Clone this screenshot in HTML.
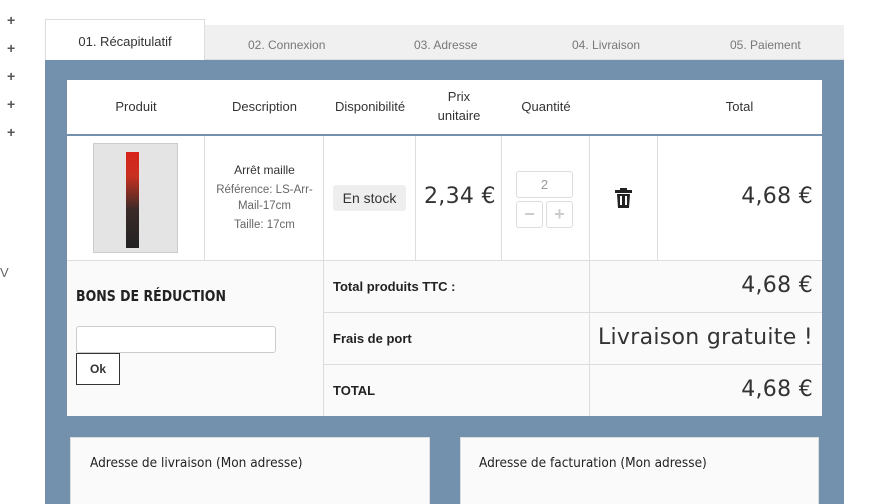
<!DOCTYPE html>
<html><head><meta charset="utf-8"><style>
*{margin:0;padding:0;box-sizing:border-box}
html,body{width:888px;height:504px;overflow:hidden}
body{background:#fff;font-family:"Liberation Sans",sans-serif;position:relative;color:#333}
.a{position:absolute}
.plus{left:7px;font-size:14px;color:#555;font-weight:bold}
.tabbar{left:45px;top:25px;width:799px;height:35px;background:#f0f0f0;border-bottom:1px solid #ddd}
.tab{top:38px;font-size:12px;color:#777}
.act{left:45px;top:19px;width:160px;height:42px;background:#fff;border:1px solid #ddd;border-bottom:none;font-size:13px;color:#333;text-align:center;padding-top:14px}
.panel{left:45px;top:60px;width:799px;height:444px;background:#7390ad}
.tbl{left:67px;top:80px;width:755px;height:336px;background:#fff}
.h{top:80px;height:54px;display:flex;align-items:center;justify-content:center;text-align:center;font-size:13px;color:#333;line-height:19px}
.vl{width:1px;background:#ddd}
.hl{height:1px;background:#ddd}
.sum{background:#fafafa}
.lbl{font-size:13px;font-weight:bold;color:#222}
.big{font-family:"DejaVu Sans",sans-serif;font-size:22px;color:#333;letter-spacing:0.3px}
.addr{background:#fafafa;border:1px solid #ddd;border-bottom:none}
.cond{font-family:"DejaVu Sans Condensed","DejaVu Sans",sans-serif}
</style></head><body>
<div class="a plus" style="top:12px">+</div>
<div class="a plus" style="top:40px">+</div>
<div class="a plus" style="top:68px">+</div>
<div class="a plus" style="top:96px">+</div>
<div class="a plus" style="top:124px">+</div>
<div class="a" style="left:0;top:265px;font-size:13px;color:#666">V</div>
<div class="a tabbar"></div>
<div class="a tab" style="left:248px">02. Connexion</div>
<div class="a tab" style="left:414px">03. Adresse</div>
<div class="a tab" style="left:572px">04. Livraison</div>
<div class="a tab" style="left:730px">05. Paiement</div>
<div class="a act">01. Récapitulatif</div>
<div class="a panel"></div>
<div class="a tbl"></div>
<div class="a h" style="left:67px;width:138px;top:79px">Produit</div>
<div class="a h" style="left:205px;width:119px;top:79px">Description</div>
<div class="a h" style="left:324px;width:92px;top:79px">Disponibilité</div>
<div class="a h" style="left:416px;width:86px;top:79px">Prix<br>unitaire</div>
<div class="a h" style="left:502px;width:88px;top:79px">Quantité</div>
<div class="a h" style="left:657px;width:165px;top:79px">Total</div>
<div class="a" style="left:67px;top:134px;width:755px;height:2px;background:#7390ad"></div>
<div class="a vl" style="left:204px;top:136px;height:124px"></div>
<div class="a vl" style="left:323px;top:136px;height:280px"></div>
<div class="a vl" style="left:415px;top:136px;height:124px"></div>
<div class="a vl" style="left:501px;top:136px;height:124px"></div>
<div class="a vl" style="left:589px;top:136px;height:280px"></div>
<div class="a vl" style="left:657px;top:136px;height:124px"></div>
<div class="a sum" style="left:67px;top:261px;width:256px;height:155px"></div>
<div class="a sum" style="left:324px;top:261px;width:265px;height:155px"></div>
<div class="a sum" style="left:590px;top:261px;width:232px;height:155px"></div>
<div class="a hl" style="left:67px;top:260px;width:755px"></div>
<div class="a hl" style="left:324px;top:312px;width:498px"></div>
<div class="a hl" style="left:324px;top:364px;width:498px"></div>
<div class="a vl" style="left:323px;top:260px;height:156px"></div>
<div class="a vl" style="left:589px;top:260px;height:156px"></div>
<div class="a" style="left:93px;top:143px;width:85px;height:110px;background:#e4e4e4;border:1px solid #ccc"></div>
<div class="a" style="left:126px;top:152px;width:13px;height:96px;background:linear-gradient(#d8221a 0%,#c83020 25%,#3a2a28 60%,#222 100%)"></div>
<div class="a" style="left:205px;top:162px;width:119px;text-align:center;font-size:12px;color:#333;line-height:16px">Arrêt maille</div>
<div class="a" style="left:205px;top:182px;width:119px;text-align:center;font-size:11.5px;color:#666;line-height:16px">Référence: LS-Arr-<br>Mail-17cm</div>
<div class="a" style="left:205px;top:219px;width:119px;text-align:center;font-size:11.5px;color:#666">Taille: 17cm</div>
<div class="a" style="left:333px;top:185px;width:73px;height:26px;background:#eee;border-radius:3px;font-size:14px;color:#333;text-align:center;line-height:26px">En stock</div>
<div class="a big" style="left:424px;top:184px">2,34 €</div>
<div class="a" style="left:516px;top:171px;width:57px;height:27px;border:1px solid #ddd;border-radius:3px;font-size:13px;color:#999;text-align:center;line-height:25px">2</div>
<div class="a" style="left:516px;top:201px;width:27px;height:27px;border:1px solid #ddd;border-radius:3px;color:#ccc;text-align:center;line-height:25px;font-size:18px;font-weight:bold">−</div>
<div class="a" style="left:546px;top:201px;width:27px;height:27px;border:1px solid #ddd;border-radius:3px;color:#ccc;text-align:center;line-height:25px;font-size:18px;font-weight:bold">+</div>
<svg class="a" style="left:615px;top:188px" width="17" height="20" viewBox="0 0 17 20"><rect x="0" y="2" width="17" height="3" fill="#222"/><rect x="5" y="0" width="7" height="3" fill="#222"/><path d="M2 6h13l-1 14H3z" fill="#222"/><rect x="5" y="8" width="2" height="9" fill="#fff"/><rect x="10" y="8" width="2" height="9" fill="#fff"/></svg>
<div class="a big" style="right:75px;top:184px">4,68 €</div>
<div class="a cond" style="left:76px;top:287px;font-size:15.5px;font-weight:bold;color:#222;transform:scaleX(0.9);transform-origin:left">BONS DE RÉDUCTION</div>
<div class="a" style="left:76px;top:326px;width:200px;height:27px;background:#fff;border:1px solid #ccc;border-radius:3px"></div>
<div class="a" style="left:76px;top:353px;width:44px;height:32px;background:#fff;border:1px solid #333;font-size:12px;font-weight:bold;text-align:center;line-height:30px">Ok</div>
<div class="a lbl" style="left:333px;top:279px">Total produits TTC :</div>
<div class="a lbl" style="left:333px;top:331px">Frais de port</div>
<div class="a lbl" style="left:333px;top:383px">TOTAL</div>
<div class="a big" style="right:75px;top:273px">4,68 €</div>
<div class="a big" style="right:75px;top:325px">Livraison gratuite !</div>
<div class="a big" style="right:75px;top:377px">4,68 €</div>
<div class="a addr" style="left:70px;top:437px;width:360px;height:67px"></div>
<div class="a addr" style="left:460px;top:437px;width:359px;height:67px"></div>
<div class="a cond" style="left:90px;top:455px;font-size:13.5px;color:#222">Adresse de livraison (Mon adresse)</div>
<div class="a cond" style="left:479px;top:455px;font-size:13.5px;color:#222">Adresse de facturation (Mon adresse)</div>
</body></html>
